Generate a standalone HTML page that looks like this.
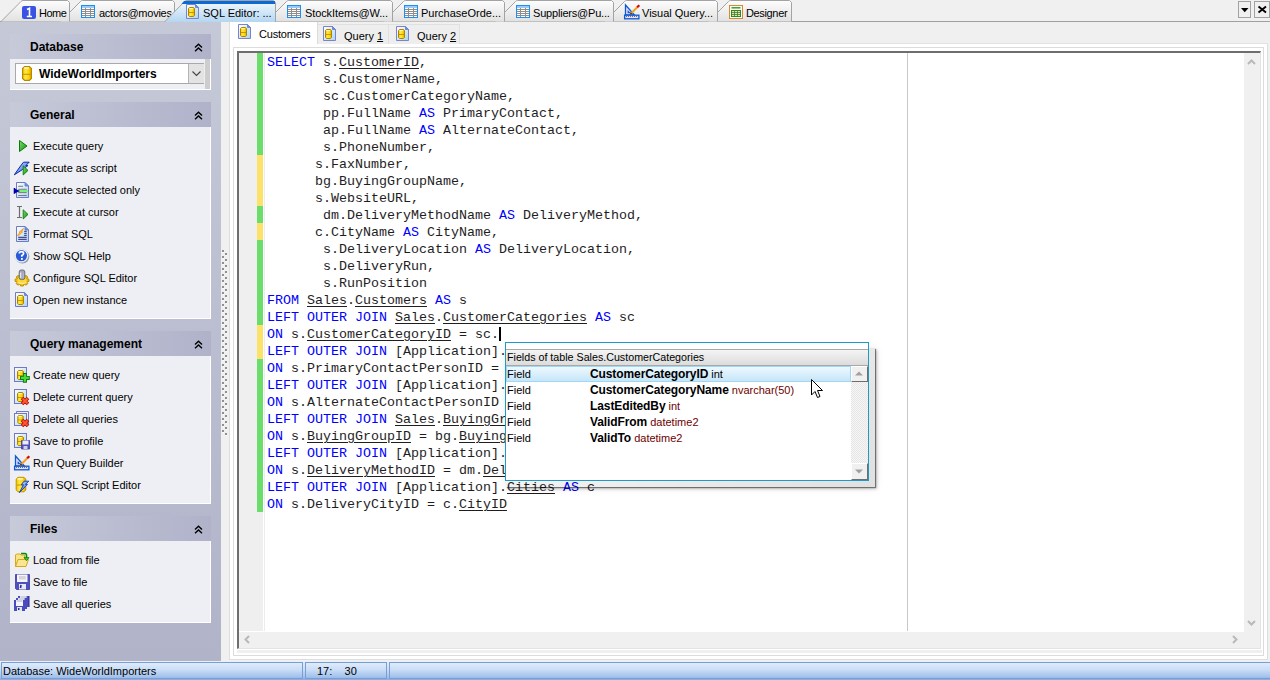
<!DOCTYPE html>
<html><head><meta charset="utf-8">
<style>
*{margin:0;padding:0;box-sizing:border-box}
html,body{width:1270px;height:680px;overflow:hidden;background:#f0f0f0;font-family:"Liberation Sans",sans-serif;font-size:11px;color:#000}
.a{position:absolute}
svg{position:absolute;overflow:visible}
.t{position:absolute;white-space:pre;line-height:13px}
/* left panel */
#lp{left:0;top:22px;width:221px;height:639px;background:linear-gradient(#c5c9d7,#b1b3c9)}
.gh{position:absolute;left:10px;width:201px;height:25px;background:linear-gradient(90deg,#c6cad9,#b0b2ca)}
.gh b{position:absolute;left:20px;top:6px;font-size:12px;line-height:14px;font-weight:bold;color:#000}
.gc{position:absolute;left:10px;width:201px;background:#eeeff4;border-right:1px solid #fff;border-bottom:1px solid #fff}
.it{position:absolute;left:33px;white-space:pre;line-height:13px}
/* code */
#code{position:absolute;left:267px;top:54px;font-family:"Liberation Mono",monospace;font-size:13.333px;line-height:17px;white-space:pre;color:#1e1e1e}
#code .k{color:#0000ff}
#code u{text-decoration:underline;text-underline-offset:2px}
</style></head><body>

<svg width="0" height="0" style="position:absolute">
<defs>
<linearGradient id="gy" x1="0" y1="0" x2="1" y2="0"><stop offset="0" stop-color="#f0c800"/><stop offset=".35" stop-color="#ffe84a"/><stop offset=".7" stop-color="#ffd400"/><stop offset="1" stop-color="#d9a800"/></linearGradient>
<linearGradient id="gd" x1="0" y1="0" x2="1" y2="1"><stop offset="0" stop-color="#ffffff"/><stop offset="1" stop-color="#a8d4f2"/></linearGradient>
<linearGradient id="gf" x1="0" y1="0" x2="0" y2="1"><stop offset="0" stop-color="#fff2a8"/><stop offset="1" stop-color="#e8b830"/></linearGradient>
<symbol id="cyl" viewBox="0 0 10 15">
 <path d="M2.6,0.6 H7.4 L9.4,2.6 V12.4 L7.4,14.4 H2.6 L0.6,12.4 V2.6 Z" fill="url(#gy)" stroke="#b88800" stroke-width="1.2"/>
 <path d="M1,8.3 H9" stroke="#c49200" stroke-width="1"/>
 <path d="M2,2 H7" stroke="#fffbe0" stroke-width="1.2"/>
</symbol>
<symbol id="cyl7" viewBox="0 0 7 10">
 <path d="M1.5,0.5 H5.5 L6.5,1.5 V8.5 L5.5,9.5 H1.5 L0.5,8.5 V1.5 Z" fill="url(#gy)" stroke="#b08400" stroke-width="1"/>
 <path d="M1,5.5 H6" stroke="#c89600" stroke-width="1"/>
 <path d="M1.5,1.6 H5" stroke="#fffbe0" stroke-width=".9"/>
</symbol>
<symbol id="doc" viewBox="0 0 16 16">
 <path d="M0.5,0.5 H9.5 L12.5,3.5 V14.5 H0.5 Z" fill="url(#gd)" stroke="#7a82cc"/>
 <path d="M9.5,0.5 V3.5 H12.5 Z" fill="#4aa0e8" stroke="#7178c4" stroke-width=".8"/>
</symbol>
<symbol id="dbdoc" viewBox="0 0 16 16">
 <use href="#doc" width="16" height="16"/>
 <use href="#cyl7" x="2" y="3" width="7" height="10"/>
</symbol>
<symbol id="tbl" viewBox="0 0 14 13">
 <rect x="0" y="0" width="14" height="13" fill="#1c8ff0"/>
 <rect x="1" y="1" width="12" height="11" fill="#fff"/>
 <rect x="1" y="1" width="12" height="2" fill="#9ccaf8"/>
 <path d="M1,4.5 H13 M1,6.5 H13 M1,8.5 H13 M1,10.5 H13" stroke="#8e8e8e" stroke-width="1"/>
 <path d="M4.5,3 V12 M9.5,3 V12" stroke="#8e8e8e" stroke-width="1"/>
 <path d="M0.5,0.5 H13.5 V12.5 H0.5 Z" fill="none" stroke="#1c8ff0" stroke-width="1"/>
</symbol>
<symbol id="vq" viewBox="0 0 16 16">
 <path d="M1.5,1 V11 H10 Z" fill="#e6dcff" stroke="#0a5ad0" stroke-width="1.4"/>
 <path d="M3.5,6 V9.5 H7 Z" fill="#0a5ad0"/>
 <rect x="0.7" y="11.2" width="14" height="3.6" fill="#e6dcff" stroke="#0a5ad0" stroke-width="1.4"/>
 <path d="M3,12.5 V13.3 M5,12.5 V13.3 M7,12.5 V13.3 M9,12.5 V13.3 M11,12.5 V13.3" stroke="#555" stroke-width=".9"/>
 <path d="M5.5,10 L13.5,2" stroke="#f0a020" stroke-width="2"/>
 <path d="M12.5,3 L14.5,1" stroke="#e00000" stroke-width="2.2"/>
</symbol>
<symbol id="dsg" viewBox="0 0 14 14">
 <rect x="0.5" y="0.5" width="13" height="13" fill="#fffaf0" stroke="#d88a30"/>
 <path d="M2.5,2.8 H11.5" stroke="#2a9a2a" stroke-width="1.4"/>
 <rect x="2.5" y="5.5" width="9" height="6" fill="#f8d8b0" stroke="#2a8a2a"/>
 <path d="M2.5,7.5 H11.5 M2.5,9.5 H11.5 M5.5,5.5 V11.5 M8.5,5.5 V11.5" stroke="#2a8a2a" stroke-width=".8"/>
</symbol>
<symbol id="home" viewBox="0 0 14 13">
 <rect x="0" y="0" width="14" height="13" rx="2" fill="#3a52e4"/>
 <path d="M5,3.5 L7.5,2.2 V10.5 M4.8,10.5 H10" fill="none" stroke="#fff" stroke-width="1.6"/>
</symbol>

















<linearGradient id="gg" x1="0" y1="0" x2="1" y2="1"><stop offset="0" stop-color="#7ae26a"/><stop offset="1" stop-color="#0e8a10"/></linearGradient>
<linearGradient id="gb" x1="0" y1="0" x2="1" y2="1"><stop offset="0" stop-color="#c8e4ff"/><stop offset="1" stop-color="#2a5ae0"/></linearGradient>
<linearGradient id="gr" x1="0" y1="0" x2="1" y2="1"><stop offset="0" stop-color="#ff9a70"/><stop offset="1" stop-color="#f02a10"/></linearGradient>
<symbol id="s_play" viewBox="0 0 20 20"><path d="M7.5,4.5 L15,10 L7.5,15.5 Z" fill="url(#gg)" stroke="#0a7a0a" stroke-width="1"/></symbol>
<symbol id="s_script" viewBox="0 0 20 20">
 <path d="M2.3,16.8 L8.5,8 L11.5,4.2 H17.2 L13.8,7.6 H15.9 L10.4,11.6 Z" fill="url(#gb)" stroke="#0a28a8" stroke-width="1"/>
 <path d="M11.2,7.8 L16,12.4 L11.2,17 Z" fill="url(#gg)" stroke="#0a7a0a" stroke-width=".9"/>
</symbol>
<symbol id="s_sel" viewBox="0 0 20 20">
 <path d="M4.5,2.5 H13 L16.5,6 V17.5 H4.5 Z" fill="url(#gd)" stroke="#7178c4"/>
 <path d="M13,2.5 V6 H16.5 Z" fill="#4aa0e8" stroke="#7178c4" stroke-width=".8"/>
 <path d="M6.2,6.3 H11 M6.2,9.3 H14.7 M6.2,12.6 H14.7 M6.2,15.5 H14.7" stroke="#7a7a7a" stroke-width="1"/>
 <path d="M6,11 H16" stroke="#7af07a" stroke-width="2"/>
 <path d="M2.5,8 V13.8 M2.5,9.5 L6,11 L2.5,12.5 Z" stroke="#0000b0" fill="#0000b0" stroke-width="1.6"/>
</symbol>
<symbol id="s_cur" viewBox="0 0 20 20">
 <path d="M5,4.5 H10 M7.5,4.5 V15.5 M5,15.5 H10" stroke="#6e6e6e" stroke-width="1.2" fill="none"/>
 <path d="M11.2,7.8 L16,12.4 L11.2,17 Z" fill="url(#gg)" stroke="#0a7a0a" stroke-width=".9"/>
</symbol>
<symbol id="s_fmt" viewBox="0 0 20 20">
 <path d="M4.5,2.5 H13 L16.5,6 V17.5 H4.5 Z" fill="url(#gd)" stroke="#7178c4"/>
 <path d="M13,2.5 V6 H16.5 Z" fill="#4aa0e8" stroke="#7178c4" stroke-width=".8"/>
 <path d="M12.2,7.4 H14.7 M12.2,9.4 H14.7 M12.2,11.4 H14.7 M6.2,13.4 H14.7 M6.2,15.4 H14.7" stroke="#4a4a8e" stroke-width="1.1"/>
 <path d="M5.5,11.5 L8,8.5 L7,8.3 L11.5,4.5 L9.5,7.6 L10.5,7.8 L6.5,11.8 Z" fill="#ffe020" stroke="#f09020" stroke-width=".9"/>
</symbol>
<symbol id="s_help" viewBox="0 0 20 20">
 <circle cx="10.4" cy="10.7" r="6.9" fill="#505864" opacity=".6"/>
 <circle cx="9.4" cy="9.7" r="6.8" fill="#fafcff" stroke="#c8d0e0" stroke-width=".6"/>
 <circle cx="9.4" cy="9.7" r="5.6" fill="#2a5ad6"/>
 <path d="M7.3,7.6 Q7.3,5.6 9.5,5.6 Q11.6,5.6 11.6,7.4 Q11.6,8.6 9.8,9.5 V10.8" fill="none" stroke="#fff" stroke-width="1.7"/>
 <rect x="9" y="12" width="1.8" height="1.8" fill="#fff"/>
</symbol>
<symbol id="s_gear" viewBox="0 0 20 20">
 <path d="M15.08,10.80 L16.97,11.21 L16.97,13.39 L15.08,13.80 L14.89,14.19 L15.87,15.57 L13.99,17.12 L12.30,16.31 L11.83,16.47 L11.33,18.02 L8.67,18.02 L8.17,16.47 L7.70,16.31 L6.01,17.12 L4.13,15.57 L5.11,14.19 L4.92,13.80 L3.03,13.39 L3.03,11.21 L4.92,10.80 L5.11,10.41 L4.13,9.03 L6.01,7.48 L7.70,8.29 L8.17,8.13 L8.67,6.58 L11.33,6.58 L11.83,8.13 L12.30,8.29 L13.99,7.48 L15.87,9.03 L14.89,10.41 Z" fill="#eebc00" stroke="#b88a00" stroke-width=".9"/>
 <ellipse cx="10" cy="12.6" rx="4.6" ry="3.4" fill="#ffd83a"/>
 <path d="M5.5,14.5 Q10,17 14.5,14.5" fill="none" stroke="#fff0a0" stroke-width="1"/>
 <rect x="7.2" y="2" width="5.6" height="9.6" rx="2" fill="#a4a8b4" stroke="#646874" stroke-width=".9"/>
 <path d="M8.7,4.5 V10" stroke="#f4f6fa" stroke-width="1"/>
 <path d="M11.3,5 V10" stroke="#b4b4f0" stroke-width="1"/>
</symbol>
<symbol id="s_open" viewBox="0 0 20 20">
 <path d="M3.5,2.5 H12.5 L15.5,5.5 V16.5 H3.5 Z" fill="url(#gd)" stroke="#7178c4"/>
 <path d="M12.5,2.5 V5.5 H15.5 Z" fill="#4aa0e8" stroke="#7178c4" stroke-width=".8"/>
 <use href="#cyl7" x="5" y="5" width="7" height="10"/>
</symbol>
<symbol id="s_sqdoc" viewBox="0 0 20 20">
 <rect x="2.5" y="2.5" width="12" height="14" fill="url(#gd)" stroke="#7178c4"/>
 <use href="#cyl7" x="5" y="5" width="7" height="10"/>
</symbol>
<symbol id="s_cplus" viewBox="0 0 20 20">
 <use href="#s_sqdoc" width="20" height="20"/>
 <path d="M12.9,8 V17.8 M8,12.9 H17.8" stroke="#0a7a0a" stroke-width="4"/>
 <path d="M12.9,9 V16.8 M9,12.9 H16.8" stroke="#4ad83a" stroke-width="2.2"/>
</symbol>
<symbol id="s_cdel" viewBox="0 0 20 20">
 <use href="#s_sqdoc" width="20" height="20"/>
 <path d="M10,11 L16,17 M16,11 L10,17" stroke="#b80a0a" stroke-width="3.6"/>
 <path d="M10.5,11.5 L15.5,16.5 M15.5,11.5 L10.5,16.5" stroke="#ff5a30" stroke-width="1.8"/>
</symbol>
<symbol id="s_cdelall" viewBox="0 0 20 20">
 <path d="M4.5,4 V2.5 H16.5 V15" fill="none" stroke="#7178c4"/>
 <rect x="2.5" y="4.5" width="12" height="12" fill="url(#gd)" stroke="#7178c4"/>
 <use href="#cyl7" x="5" y="6" width="7" height="9"/>
 <path d="M10,11 L16,17 M16,11 L10,17" stroke="#b80a0a" stroke-width="3.6"/>
 <path d="M10.5,11.5 L15.5,16.5 M15.5,11.5 L10.5,16.5" stroke="#ff5a30" stroke-width="1.8"/>
</symbol>
<symbol id="s_csave" viewBox="0 0 20 20">
 <use href="#s_sqdoc" width="20" height="20"/>
 <path d="M9.5,9.5 H17.5 V18 H9.5 Z" fill="#4e50c0" stroke="#3a3aa0" stroke-width=".8"/>
 <rect x="10.5" y="9.5" width="6" height="4" fill="#ececf4"/>
 <rect x="11.5" y="15" width="4" height="3" fill="#d0d0e8"/>
</symbol>
<symbol id="s_qb" viewBox="0 0 20 20">
 <path d="M3.5,3 V13 H12.5 Z" fill="#e6dcff" stroke="#0a5ad0" stroke-width="1.3"/>
 <path d="M5.6,8 V11.2 H8.8 Z" fill="#0a5ad0"/>
 <rect x="2.6" y="13.2" width="14.3" height="3.6" fill="#e6dcff" stroke="#0a5ad0" stroke-width="1.3"/>
 <path d="M4.5,14.2 V15 M6.5,14.2 V15 M8.5,14.2 V15 M10.5,14.2 V15 M12.5,14.2 V15 M14.5,14.2 V15" stroke="#555" stroke-width="1"/>
 <path d="M8.5,12 L15.5,5" stroke="#f0a020" stroke-width="2"/>
 <path d="M8.5,12 L9.5,11" stroke="#503010" stroke-width="2"/>
 <path d="M15.2,5.3 L17.3,3.2" stroke="#e00000" stroke-width="2.2"/>
</symbol>
<symbol id="s_sse" viewBox="0 0 20 20">
 <path d="M6,2.3 H12 L13.8,4.1 V15 L12,16.8 H6 L4.2,15 V4.1 Z" fill="url(#gy)" stroke="#c49200" stroke-width="1"/>
 <path d="M5,10 H13" stroke="#c49200" stroke-width="1"/>
 <path d="M5.5,4 H11" stroke="#fffbe0" stroke-width="1.2"/>
 <path d="M16.8,6.2 H12 L9.3,9.8 H11.5 L7.4,17.6 L15.5,9.3 H13.5 Z" fill="url(#gb)" stroke="#0a3ac0" stroke-width=".9"/>
</symbol>
<symbol id="s_fold" viewBox="0 0 20 20">
 <path d="M3.5,16.5 V5 L4.5,4 H8 L9,5 H12.5 V9" fill="#f8e488" stroke="#d8a818" stroke-width="1"/>
 <path d="M3.5,16.5 L6,9.5 H16.5 L14,16.5 Z" fill="#fae690" stroke="#d8a818" stroke-width="1"/>
 <path d="M9,3.5 H13 Q14.5,3.5 14.5,5.5 V8" fill="none" stroke="#0a8a0a" stroke-width="1.6"/>
 <path d="M12,7.5 H17 L14.5,10.8 Z" fill="#3ac83a" stroke="#0a8a0a" stroke-width=".8"/>
</symbol>
<symbol id="s_flop" viewBox="0 0 20 20">
 <path d="M3.5,2.5 H17.5 V17.5 H4.5 L3.5,16.5 Z" fill="#4e50c0" stroke="#3a3aa0" stroke-width=".8"/>
 <rect x="5" y="2.5" width="10.5" height="7.5" fill="#f4f4fa"/>
 <rect x="7" y="4" width="6.8" height="3.5" fill="#d4d4da"/>
 <rect x="7" y="12" width="7" height="5.5" fill="#e8e8f0"/>
 <path d="M9,13 L8.5,16" stroke="#2a2aa0" stroke-width="1.6"/>
</symbol>
<symbol id="s_flops" viewBox="0 0 20 20">
 <rect x="6" y="2" width="11" height="11" fill="#4a4cc0"/>
 <rect x="8" y="2" width="6.5" height="6" fill="#f4f4fc"/>
 <path d="M8.5,3 H14" stroke="#b0b0c8" stroke-width="1"/>
 <rect x="4" y="4" width="11" height="11" fill="#4a4cc0"/>
 <rect x="6" y="4" width="6.5" height="6" fill="#f4f4fc"/>
 <path d="M6.5,5 H12" stroke="#b0b0c8" stroke-width="1"/>
 <rect x="2" y="6" width="11" height="11" fill="#4a4cc0"/>
 <rect x="4" y="6" width="7" height="6" fill="#f4f4fc"/>
 <path d="M4.5,7 H10.5" stroke="#b0b0c8" stroke-width="1"/>
 <rect x="5" y="13" width="5" height="4" fill="#e0e8e0"/>
 <rect x="6" y="14" width="1.5" height="2" fill="#2a2aa0"/>
 <path d="M17,13 V2" stroke="#2a2a90" stroke-width="1"/>
</symbol>
<symbol id="cursor" viewBox="0 0 12 20">
 <path d="M0.5,0.5 V16 L4,12.5 L6.5,18.5 L9,17.5 L6.5,11.5 H11.5 Z" fill="#fff" stroke="#000" stroke-width="1"/>
</symbol>
</defs></svg>

<!-- TOP TAB STRIP -->
<div class="a" style="left:0;top:21px;width:1270px;height:1px;background:#a0a0a0"></div>
<svg width="1270" height="23" style="left:0;top:0">
<defs>
<linearGradient id="tg" x1="0" y1="0" x2="0" y2="1"><stop offset="0" stop-color="#fdfdfd"/><stop offset="1" stop-color="#e1e1e1"/></linearGradient>
<linearGradient id="ta" x1="0" y1="0" x2="0" y2="1"><stop offset="0" stop-color="#f4faff"/><stop offset="1" stop-color="#b4d6f2"/></linearGradient>
</defs>
<!-- inactive tabs drawn right-to-left so left ones overlap -->
<path d="M708.5,21.5 L728.5,1.5 Q729.5,0.5 730.5,0.5 L789.5,0.5 L791.5,2.5 L791.5,21.5" fill="url(#tg)" stroke="#a3a3a3"/>
<path d="M604.5,21.5 L624.5,1.5 Q625.5,0.5 626.5,0.5 L715.5,0.5 L717.5,2.5 L717.5,21.5" fill="url(#tg)" stroke="#a3a3a3"/>
<path d="M495.5,21.5 L515.5,1.5 Q516.5,0.5 517.5,0.5 L611.5,0.5 L613.5,2.5 L613.5,21.5" fill="url(#tg)" stroke="#a3a3a3"/>
<path d="M383.5,21.5 L403.5,1.5 Q404.5,0.5 405.5,0.5 L502.5,0.5 L504.5,2.5 L504.5,21.5" fill="url(#tg)" stroke="#a3a3a3"/>
<path d="M266.5,21.5 L286.5,1.5 Q287.5,0.5 288.5,0.5 L390.5,0.5 L392.5,2.5 L392.5,21.5" fill="url(#tg)" stroke="#a3a3a3"/>
<path d="M60.5,21.5 L80.5,1.5 Q81.5,0.5 82.5,0.5 L172.5,0.5 L174.5,2.5 L174.5,21.5" fill="url(#tg)" stroke="#a3a3a3"/>
<path d="M1,21.5 L21,1.5 Q22,0.5 23,0.5 L67.5,0.5 L69.5,2.5 L69.5,21.5" fill="url(#tg)" stroke="#a3a3a3"/>
</svg>
<div class="t" style="left:39px;top:7px;letter-spacing:-.5px">Home</div>
<div class="t" style="left:99px;top:7px;letter-spacing:-.25px">actors@movies</div>
<svg width="120" height="23" style="left:160px;top:0"><g transform="translate(-160,0)"><path d="M164.5,22 L184.5,1.5 Q185.5,0.5 187,0.5 L273.5,0.5 L275.5,2.5 L275.5,22" fill="url(#ta)" stroke="#a3a3a3"/>
<path d="M184,1 L275,1 L275,4 L181.5,4 Z" fill="#0c6ad6"/></g></svg>
<div class="t" style="left:203px;top:7px">SQL Editor: ...</div>
<div class="t" style="left:305px;top:7px;letter-spacing:-.1px">StockItems@W...</div>
<div class="t" style="left:421px;top:7px">PurchaseOrde...</div>
<div class="t" style="left:533px;top:7px;letter-spacing:-.2px">Suppliers@Pu...</div>
<div class="t" style="left:642px;top:7px">Visual Query...</div>
<div class="t" style="left:746px;top:7px;letter-spacing:-.35px">Designer</div>

<div class="a" style="left:1238px;top:1px;width:13px;height:17px;border:1px solid #a2a2a2;background:#f0f0f0"></div>
<svg style="left:1241px;top:8px" width="8" height="5"><path d="M0,0 H7.5 L3.75,4.2 Z" fill="#000"/></svg>
<div class="a" style="left:1254px;top:1px;width:16px;height:17px;border:1px solid #a2a2a2;background:#f0f0f0"></div>
<svg style="left:1258px;top:6px" width="9" height="7"><path d="M0.5,0.5 L8,6.5 M8,0.5 L0.5,6.5" stroke="#000" stroke-width="1.9"/></svg>
<!-- LEFT PANEL -->
<div id="lp" class="a"></div>
<div class="gh" style="top:34px"><b>Database</b></div>
<div class="gc" style="top:59px;height:31px;border-right:1px solid #fff;border-bottom:1px solid #fff"></div>
<div class="a" style="left:15px;top:63px;width:189px;height:21px;border:1px solid #a9a9a9;border-right:0;background:#fff"></div>
<div class="a" style="left:188px;top:63px;width:16px;height:21px;border-top:1px solid #a9a9a9;border-bottom:1px solid #a9a9a9;border-left:1px solid #b4b4b4;background:#e3e3e3"></div>
<svg style="left:192px;top:71px" width="9" height="5"><path d="M0.5,0.5 L4.5,4.5 L8.5,0.5" fill="none" stroke="#444" stroke-width="1.1"/></svg>
<div class="a" style="left:205px;top:59px;width:5px;height:30px;background:#cdcdcd"></div>
<div class="t" style="left:39px;top:67px;font-weight:bold;font-size:12px;line-height:14px">WideWorldImporters</div>

<div class="gh" style="top:102px"><b>General</b></div>
<div class="gc" style="top:127px;height:192px"></div>
<div class="it" style="top:140px">Execute query</div>
<div class="it" style="top:162px">Execute as script</div>
<div class="it" style="top:184px">Execute selected only</div>
<div class="it" style="top:206px">Execute at cursor</div>
<div class="it" style="top:228px">Format SQL</div>
<div class="it" style="top:250px">Show SQL Help</div>
<div class="it" style="top:272px">Configure SQL Editor</div>
<div class="it" style="top:294px">Open new instance</div>

<div class="gh" style="top:331px"><b>Query management</b></div>
<div class="gc" style="top:356px;height:148px"></div>
<div class="it" style="top:369px">Create new query</div>
<div class="it" style="top:391px">Delete current query</div>
<div class="it" style="top:413px">Delete all queries</div>
<div class="it" style="top:435px">Save to profile</div>
<div class="it" style="top:457px">Run Query Builder</div>
<div class="it" style="top:479px">Run SQL Script Editor</div>

<div class="gh" style="top:516px"><b>Files</b></div>
<div class="gc" style="top:541px;height:82px"></div>
<div class="it" style="top:554px">Load from file</div>
<div class="it" style="top:576px">Save to file</div>
<div class="it" style="top:598px">Save all queries</div>
<svg style="left:194px;top:43px" width="9" height="9"><path d="M1,4.5 L4.5,1.2 L8,4.5 M1,8.3 L4.5,5 L8,8.3" fill="none" stroke="#000" stroke-width="1.4"/></svg>
<svg style="left:194px;top:111px" width="9" height="9"><path d="M1,4.5 L4.5,1.2 L8,4.5 M1,8.3 L4.5,5 L8,8.3" fill="none" stroke="#000" stroke-width="1.4"/></svg>
<svg style="left:194px;top:340px" width="9" height="9"><path d="M1,4.5 L4.5,1.2 L8,4.5 M1,8.3 L4.5,5 L8,8.3" fill="none" stroke="#000" stroke-width="1.4"/></svg>
<svg style="left:194px;top:525px" width="9" height="9"><path d="M1,4.5 L4.5,1.2 L8,4.5 M1,8.3 L4.5,5 L8,8.3" fill="none" stroke="#000" stroke-width="1.4"/></svg>

<svg style="left:222px;top:250px" width="7" height="187"><defs><pattern id="gp" width="7" height="6" patternUnits="userSpaceOnUse"><rect x="0" y="0" width="2" height="2" fill="#8e8e8e"/><rect x="1" y="2" width="1" height="1" fill="#fff"/><rect x="3" y="3" width="2" height="2" fill="#8e8e8e"/><rect x="4" y="5" width="1" height="1" fill="#fff"/></pattern></defs><rect width="7" height="186" fill="url(#gp)"/></svg>
<!-- SUB TABS / PAGE -->
<div class="a" style="left:229px;top:22px;width:1039px;height:638px;border:1px solid #dedede;border-top:0;background:#fff"></div>
<div class="a" style="left:318px;top:22px;width:950px;height:22px;background:#f0f0f0;border-bottom:1px solid #e2e2e2"></div>
<div class="a" style="left:317px;top:24px;width:72px;height:20px;background:#eeeeee;border:1px solid #e0e0e0;border-bottom:0"></div>
<div class="a" style="left:388px;top:24px;width:72px;height:20px;background:#eeeeee;border:1px solid #e0e0e0;border-bottom:0"></div>
<div class="a" style="left:317px;top:22px;width:1px;height:22px;background:#dcdcdc"></div>
<div class="t" style="left:259px;top:28px;letter-spacing:-.2px">Customers</div>
<div class="t" style="left:344px;top:30px">Query <u>1</u></div>
<div class="t" style="left:417px;top:30px">Query <u>2</u></div>
<!-- frames -->
<div class="a" style="left:233px;top:47px;width:1031px;height:609px;border:1px solid #dcdcdc"></div>
<div class="a" style="left:237px;top:51px;width:1024px;height:598px;border-top:2px solid #6e6e6e;border-left:2px solid #6e6e6e;border-right:1px solid #e3e3e3;border-bottom:1px solid #e3e3e3;background:#fff"></div>
<div class="a" style="left:239px;top:53px;width:24px;height:578px;background:#efefef"></div>
<div class="a" style="left:257px;top:53px;width:6px;height:102px;background:#6bdd6b"></div>
<div class="a" style="left:257px;top:155px;width:6px;height:51px;background:#fde26a"></div>
<div class="a" style="left:257px;top:206px;width:6px;height:17px;background:#6bdd6b"></div>
<div class="a" style="left:257px;top:223px;width:6px;height:17px;background:#fde26a"></div>
<div class="a" style="left:257px;top:240px;width:6px;height:85px;background:#6bdd6b"></div>
<div class="a" style="left:257px;top:325px;width:6px;height:34px;background:#fde26a"></div>
<div class="a" style="left:257px;top:359px;width:6px;height:153px;background:#6bdd6b"></div>

<div class="a" style="left:264px;top:53px;width:1px;height:578px;background:#ececec"></div>
<div class="a" style="left:907px;top:53px;width:1px;height:578px;background:#c8c8c8"></div>
<!-- scrollbars -->
<div class="a" style="left:237px;top:650px;width:1025px;height:3px;background:#efefef"></div>
<div class="a" style="left:1244px;top:53px;width:16px;height:595px;background:#f0f0f0"></div>
<div class="a" style="left:239px;top:632px;width:1021px;height:16px;background:#f0f0f0;border-top:0"></div>
<svg style="left:1247px;top:59px" width="9" height="6"><path d="M1,5 L4.5,1.5 L8,5" fill="none" stroke="#b9b9b9" stroke-width="2"/></svg>
<svg style="left:1247px;top:620px" width="9" height="6"><path d="M1,1 L4.5,4.5 L8,1" fill="none" stroke="#b9b9b9" stroke-width="2"/></svg>
<svg style="left:244px;top:635px" width="6" height="9"><path d="M5,1 L1.5,4.5 L5,8" fill="none" stroke="#b9b9b9" stroke-width="2"/></svg>
<svg style="left:1232px;top:635px" width="6" height="9"><path d="M1,1 L4.5,4.5 L1,8" fill="none" stroke="#b9b9b9" stroke-width="2"/></svg>
<div id="code"><span class=k>SELECT</span> s.<u>CustomerID</u>,
       s.CustomerName,
       sc.CustomerCategoryName,
       pp.FullName <span class=k>AS</span> PrimaryContact,
       ap.FullName <span class=k>AS</span> AlternateContact,
       s.PhoneNumber,
      s.FaxNumber,
      bg.BuyingGroupName,
      s.WebsiteURL,
       dm.DeliveryMethodName <span class=k>AS</span> DeliveryMethod,
      c.CityName <span class=k>AS</span> CityName,
       s.DeliveryLocation <span class=k>AS</span> DeliveryLocation,
       s.DeliveryRun,
       s.RunPosition
<span class=k>FROM</span> <u>Sales</u>.<u>Customers</u> <span class=k>AS</span> s
<span class=k>LEFT OUTER JOIN</span> <u>Sales</u>.<u>CustomerCategories</u> <span class=k>AS</span> sc
<span class=k>ON</span> s.<u>CustomerCategoryID</u> = sc.
<span class=k>LEFT OUTER JOIN</span> [Application].<u>People</u> <span class=k>AS</span> pp
<span class=k>ON</span> s.PrimaryContactPersonID = pp.<u>PersonID</u>
<span class=k>LEFT OUTER JOIN</span> [Application].<u>People</u> <span class=k>AS</span> ap
<span class=k>ON</span> s.AlternateContactPersonID = ap.<u>PersonID</u>
<span class=k>LEFT OUTER JOIN</span> <u>Sales</u>.<u>BuyingGroups</u> <span class=k>AS</span> bg
<span class=k>ON</span> s.<u>BuyingGroupID</u> = bg.<u>BuyingGroupID</u>
<span class=k>LEFT OUTER JOIN</span> [Application].<u>DeliveryMethods</u> <span class=k>AS</span> dm
<span class=k>ON</span> s.<u>DeliveryMethodID</u> = dm.<u>DeliveryMethodID</u>
<span class=k>LEFT OUTER JOIN</span> [Application].<u>Cities</u> <span class=k>AS</span> c
<span class=k>ON</span> s.DeliveryCityID = c.<u>CityID</u></div>

<div class="a" style="left:499px;top:327px;width:2px;height:14px;background:#000"></div>

<svg style="left:22px;top:6px" width="14" height="13"><use href="#home" width="14" height="13"/></svg>
<svg style="left:81px;top:5px" width="14" height="13"><use href="#tbl" width="14" height="13"/></svg>
<svg style="left:186px;top:4px" width="16" height="16"><use href="#dbdoc" width="16" height="16"/></svg>
<svg style="left:287px;top:5px" width="14" height="13"><use href="#tbl" width="14" height="13"/></svg>
<svg style="left:404px;top:5px" width="14" height="13"><use href="#tbl" width="14" height="13"/></svg>
<svg style="left:516px;top:5px" width="14" height="13"><use href="#tbl" width="14" height="13"/></svg>
<svg style="left:622px;top:2px" width="20" height="20"><use href="#s_qb" width="20" height="20"/></svg>
<svg style="left:729px;top:5px" width="14" height="14"><use href="#dsg" width="14" height="14"/></svg>
<svg style="left:238px;top:24px" width="16" height="16"><use href="#dbdoc" width="16" height="16"/></svg>
<svg style="left:323px;top:26px" width="16" height="16"><use href="#dbdoc" width="16" height="16"/></svg>
<svg style="left:396px;top:26px" width="16" height="16"><use href="#dbdoc" width="16" height="16"/></svg>
<svg style="left:22px;top:66px" width="10" height="15"><use href="#cyl" width="10" height="15"/></svg>


<svg style="left:12px;top:136px" width="20" height="20"><use href="#s_play" width="20" height="20"/></svg>
<svg style="left:12px;top:158px" width="20" height="20"><use href="#s_script" width="20" height="20"/></svg>
<svg style="left:12px;top:180px" width="20" height="20"><use href="#s_sel" width="20" height="20"/></svg>
<svg style="left:12px;top:202px" width="20" height="20"><use href="#s_cur" width="20" height="20"/></svg>
<svg style="left:12px;top:224px" width="20" height="20"><use href="#s_fmt" width="20" height="20"/></svg>
<svg style="left:12px;top:246px" width="20" height="20"><use href="#s_help" width="20" height="20"/></svg>
<svg style="left:12px;top:268px" width="20" height="20"><use href="#s_gear" width="20" height="20"/></svg>
<svg style="left:12px;top:290px" width="20" height="20"><use href="#s_open" width="20" height="20"/></svg>
<svg style="left:12px;top:365px" width="20" height="20"><use href="#s_cplus" width="20" height="20"/></svg>
<svg style="left:12px;top:387px" width="20" height="20"><use href="#s_cdel" width="20" height="20"/></svg>
<svg style="left:12px;top:409px" width="20" height="20"><use href="#s_cdelall" width="20" height="20"/></svg>
<svg style="left:12px;top:431px" width="20" height="20"><use href="#s_csave" width="20" height="20"/></svg>
<svg style="left:12px;top:453px" width="20" height="20"><use href="#s_qb" width="20" height="20"/></svg>
<svg style="left:12px;top:475px" width="20" height="20"><use href="#s_sse" width="20" height="20"/></svg>
<svg style="left:12px;top:550px" width="20" height="20"><use href="#s_fold" width="20" height="20"/></svg>
<svg style="left:12px;top:572px" width="20" height="20"><use href="#s_flop" width="20" height="20"/></svg>
<svg style="left:12px;top:594px" width="20" height="20"><use href="#s_flops" width="20" height="20"/></svg>
<!-- POPUP -->
<div class="a" style="left:506px;top:348px;width:369px;height:139px;background:linear-gradient(135deg,rgba(0,0,0,.02),rgba(0,0,0,.12));box-shadow:1px 1px 1px rgba(0,0,0,.45),2px 2px 3px rgba(0,0,0,.2),0 0 9px rgba(0,0,0,.1)"></div>
<div class="a" style="left:505px;top:342px;width:364px;height:139px;background:#fff;border:1px solid #1d9ac8"></div>
<div class="a" style="left:506px;top:349px;width:362px;height:17px;background:linear-gradient(#f4f4f4,#dcdcdc);border-top:1px solid #a8a8a8;border-bottom:1px solid #a8a8a8"></div>
<div class="t" style="left:507px;top:351px;font-size:10.7px">Fields of table Sales.CustomerCategories</div>
<div class="a" style="left:506px;top:366px;width:345px;height:16px;background:linear-gradient(#eef8fe,#c6e6f8);border:1px solid #9ed8f6"></div>
<div class="a" style="left:851px;top:366px;width:17px;height:114px;background-color:#f6f6f6;background-image:linear-gradient(45deg,#e6e6e6 25%,transparent 25%,transparent 75%,#e6e6e6 75%),linear-gradient(45deg,#e6e6e6 25%,transparent 25%,transparent 75%,#e6e6e6 75%);background-size:2px 2px;background-position:0 0,1px 1px"></div>
<div class="a" style="left:851px;top:366px;width:17px;height:16px;background:#f0f0f0;border:1px solid #fff;border-right-color:#6e6e6e;border-bottom-color:#6e6e6e"></div>
<div class="a" style="left:851px;top:463px;width:17px;height:17px;background:#f0f0f0;border:1px solid #fff;border-right-color:#6e6e6e;border-bottom-color:#6e6e6e"></div>
<svg style="left:855px;top:371px" width="8" height="5"><path d="M0,4.5 L4,0.5 L8,4.5 Z" fill="#a0a0a0"/></svg>
<svg style="left:855px;top:469px" width="8" height="5"><path d="M0,0.5 L4,4.5 L8,0.5 Z" fill="#a0a0a0"/></svg>
<div class="t" style="left:507px;top:368px;font-size:11px">Field</div>
<div class="t" style="left:590px;top:368px;font-size:11px"><b style="font-size:12px;letter-spacing:-.1px">CustomerCategoryID</b> <span style="color:#000">int</span></div>
<div class="t" style="left:507px;top:384px;font-size:11px">Field</div>
<div class="t" style="left:590px;top:384px;font-size:11px"><b style="font-size:12px;letter-spacing:-.1px">CustomerCategoryName</b> <span style="color:#6e0000">nvarchar(50)</span></div>
<div class="t" style="left:507px;top:400px;font-size:11px">Field</div>
<div class="t" style="left:590px;top:400px;font-size:11px"><b style="font-size:12px;letter-spacing:-.1px">LastEditedBy</b> <span style="color:#6e0000">int</span></div>
<div class="t" style="left:507px;top:416px;font-size:11px">Field</div>
<div class="t" style="left:590px;top:416px;font-size:11px"><b style="font-size:12px;letter-spacing:-.1px">ValidFrom</b> <span style="color:#6e0000">datetime2</span></div>
<div class="t" style="left:507px;top:432px;font-size:11px">Field</div>
<div class="t" style="left:590px;top:432px;font-size:11px"><b style="font-size:12px;letter-spacing:-.1px">ValidTo</b> <span style="color:#6e0000">datetime2</span></div>
<svg style="left:811px;top:379px" width="12" height="20"><use href="#cursor" width="12" height="20"/></svg>

<!-- STATUS BAR -->
<div class="a" style="left:0;top:661px;width:1270px;height:19px;background:linear-gradient(#e8f0fb 0,#e8f0fb 1px,#dfebfb 2px,#cadef7 45%,#a9c6ee 78%,#92b4e6 95%,#86aae0)"></div>
<div class="a" style="left:1px;top:662px;width:302px;height:17px;border:1px solid #7a9ed2"></div>
<div class="a" style="left:305px;top:662px;width:82px;height:17px;border:1px solid #7a9ed2"></div>
<div class="a" style="left:389px;top:662px;width:884px;height:17px;border:1px solid #7a9ed2"></div>
<div class="t" style="left:3px;top:665px">Database: WideWorldImporters</div>
<div class="t" style="left:317px;top:665px">17:    30</div>
</body></html>
